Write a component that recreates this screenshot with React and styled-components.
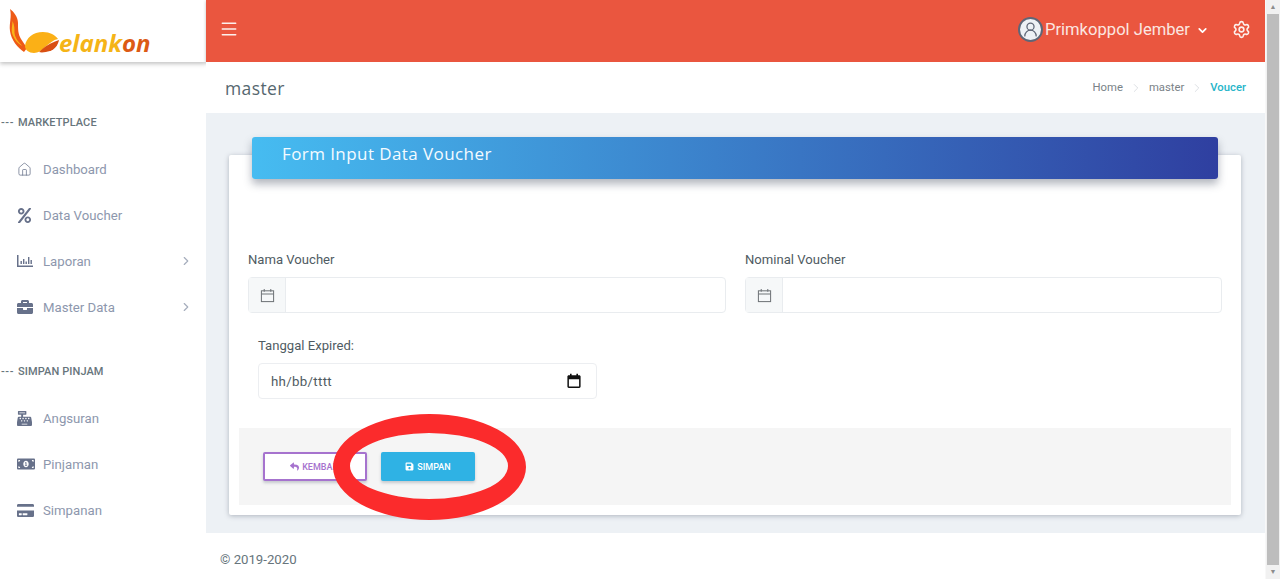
import React from "react";
import styled, { createGlobalStyle } from "styled-components";
import { Menu, ChevronDown, ChevronRight, Settings, Home, UserRound } from "lucide-react";
import { FaBriefcase, FaMoneyBillAlt, FaCreditCard, FaCashRegister, FaReply, FaSave, FaPercent } from "react-icons/fa";

const GlobalStyle = createGlobalStyle`
  html, body {
    margin: 0;
    padding: 0;
    height: 579px;
    overflow: hidden;
    font-family: "Roboto", "Liberation Sans", sans-serif;
    background: #fff;
  }
  #root { height: 579px; }
  * { box-sizing: border-box; }
`;

const Page = styled.div`
  position: relative;
  display: flex;
  height: 579px;
  overflow: hidden;
`;

const Sidebar = styled.aside`
  width: 206px;
  flex: none;
  background: #fff;
`;

const Brand = styled.div`
  height: 62px;
  padding: 8px 0 0 9px;
  display: flex;
  align-items: flex-start;
  box-shadow: 0 2px 4px rgba(60, 60, 60, 0.3);
`;

const BrandText = styled.span`
  font-family: "Open Sans", sans-serif;
  font-style: italic;
  font-weight: 700;
  font-size: 24px;
  line-height: 28px;
  margin: 21px 0 0 -1px;
  color: #f5b417;
`;

const BrandAccent = styled.span`
  color: #dc5a14;
`;

const SectionLabel = styled.div`
  font-size: 11px;
  font-weight: 500;
  line-height: 14px;
  padding-left: 1px;
  color: #67757c;
  padding-top: ${(p) => p.$top}px;
  white-space: nowrap;
  letter-spacing: 0.1px;
`;

const SectionDash = styled.span`
  letter-spacing: 0.6px;
  margin-right: 4px;
`;

const NavList = styled.ul`
  list-style: none;
  margin: 0;
  padding: 16px 0 0;
`;

const NavRow = styled.li`
  height: 46px;
  display: flex;
  align-items: center;
  padding: 0 13px 0 17px;
  color: #8d97ad;
  font-size: 13.2px;
`;

const NavIcon = styled.span`
  width: 26px;
  flex: none;
  display: flex;
  color: #67718a;
`;

const NavText = styled.span`
  flex: 1;
`;

const Main = styled.div`
  flex: 1;
  min-width: 0;
  display: flex;
  flex-direction: column;
  background: #edf1f5;
`;

const Topbar = styled.header`
  height: 62px;
  flex: none;
  background: #ea563f;
  display: flex;
  align-items: center;
  justify-content: space-between;
  padding: 0 14px 4px 13px;
  color: #fff;
  box-shadow: 0 1px 3px rgba(0, 0, 0, 0.25);
`;

const IconButton = styled.span`
  display: flex;
  color: #fdf0ed;
`;

const UserArea = styled.div`
  display: flex;
  align-items: center;
`;

const Avatar = styled.span`
  width: 25px;
  height: 25px;
  border-radius: 50%;
  background: #eef1f6;
  border: 2px solid #5f6677;
  color: #5f6677;
  display: flex;
  align-items: center;
  justify-content: center;
`;

const UserName = styled.span`
  font-size: 16.6px;
  margin-left: 2px;
  color: #fbe6e1;
`;

const TitleBar = styled.div`
  height: 51px;
  flex: none;
  background: #fff;
  display: flex;
  align-items: center;
  justify-content: space-between;
  padding: 0 19px 0 19px;
`;

const PageTitle = styled.h1`
  margin: 0;
  font-family: "Open Sans", sans-serif;
  font-weight: 400;
  font-size: 17.5px;
  letter-spacing: 0.4px;
  color: #56676f;
`;

const Crumbs = styled.nav`
  display: flex;
  align-items: center;
  gap: 6px;
  font-size: 11.3px;
  color: #7a8287;
`;

const CrumbSep = styled.span`
  display: flex;
  color: #c4c9d0;
`;

const CrumbCurrent = styled.span`
  color: #26b5c9;
  font-weight: 500;
`;

const Content = styled.main`
  flex: 1;
  padding: 42px 24px 18px 23px;
`;

const Card = styled.section`
  display: flow-root;
  height: 360px;
  background: #fff;
  border-radius: 2px;
  box-shadow: 0 1px 5px rgba(60, 70, 90, 0.35);
  padding: 0 19px;
`;

const CardHeader = styled.div`
  height: 42px;
  margin: -18px 4px 0;
  padding: 0 30px;
  border-radius: 3px;
  background: linear-gradient(90deg, #46bcf1, #2f3fa0);
  box-shadow: 0 5px 9px rgba(60, 70, 90, 0.4);
  color: #f4fbff;
  font-family: "Open Sans", sans-serif;
  font-size: 17px;
  line-height: 34px;
  letter-spacing: 0.42px;
`;

const FieldRow = styled.div`
  display: grid;
  grid-template-columns: 478px 477px;
  gap: 19px;
  margin-top: 73px;
`;

const Label = styled.div`
  font-size: 13.1px;
  line-height: 16px;
  color: #4f5b62;
  margin-bottom: 9px;
`;

const InputGroup = styled.div`
  height: 36px;
  display: flex;
  border: 1px solid #e9ecef;
  border-radius: 4px;
  background: #fff;
`;

const InputAddon = styled.span`
  width: 37px;
  flex: none;
  display: flex;
  align-items: center;
  justify-content: center;
  background: #f6f8f9;
  border-right: 1px solid #e9ecef;
  color: #6f7478;
`;

const DateBlock = styled.div`
  width: 339px;
  margin: 25px 0 0 10px;
`;

const DateField = styled.div`
  height: 36px;
  display: flex;
  align-items: center;
  justify-content: space-between;
  padding: 0 14px 0 12px;
  border: 1px solid #eceef1;
  border-radius: 4px;
  font-size: 13.3px;
  letter-spacing: 0.3px;
  color: #4f5b62;
`;

const ActionBar = styled.div`
  height: 77px;
  margin: 29px -9px 0 -9px;
  background: #f5f5f5;
  display: flex;
  align-items: center;
  gap: 14px;
  padding: 0 0 0 24px;
`;

const ActionButton = styled.button`
  width: ${(p) => p.$width}px;
  height: 29px;
  display: flex;
  align-items: center;
  justify-content: center;
  gap: 3px;
  padding: 0;
  border-radius: 2px;
  font-family: inherit;
  font-size: 9px;
  font-weight: 500;
  border: ${(p) => (p.$outline ? "2px solid #a673ce" : "none")};
  background: ${(p) => (p.$outline ? "#fff" : "#2fb2e4")};
  color: ${(p) => (p.$outline ? "#a673ce" : "#fff")};
  box-shadow: 0 2px 3px rgba(60, 70, 90, 0.25);
`;

const Footer = styled.footer`
  height: 46px;
  flex: none;
  background: #fff;
  display: flex;
  align-items: center;
  padding: 7px 14px 0;
  font-size: 13.2px;
  color: #67757c;
`;

const Scrollbar = styled.div`
  width: 15px;
  flex: none;
  background: #f1f1f1;
  border-left: 1px solid #f8f8f8;
  display: flex;
  flex-direction: column;
  align-items: center;
`;

const ScrollArrow = styled.span`
  height: 14px;
  flex: none;
  font-size: 7px;
  line-height: 14px;
  color: #8c8c8c;
`;

const ScrollThumb = styled.div`
  width: 12px;
  flex: 1;
  background: #bdbdbd;
`;

const AnnotationMark = styled.svg`
  position: absolute;
  left: 330px;
  top: 412px;
`;

const CalendarLine = ({ size = 15 }) => (
  <svg width={size} height={size} viewBox="0 0 16 16" fill="none" stroke="currentColor" strokeWidth="1.1">
    <rect x="1.5" y="3" width="13" height="11.5" />
    <path d="M1.5 6.500h13M4.500 1v3M11.500 1v3" />
  </svg>
);

const CalendarSolid = () => (
  <svg width="16" height="16" viewBox="0 0 16 16" fill="#111">
    <path d="M4 0.800h1.600v1.400h4.800V0.800H12v1.400h1.200c.8 0 1.400.6 1.400 1.400v10c0 .8-.6 1.400-1.400 1.400H2.800c-.8 0-1.400-.6-1.400-1.400v-10c0-.8.6-1.400 1.400-1.400H4zM2.900 6.200v7.400h10.200V6.200z" />
  </svg>
);

const ReportIcon = () => (
  <svg width="16" height="14" viewBox="0 0 16 14" fill="currentColor">
    <path d="M0 1h1.500v10.500H16V13H0z" />
    <path d="M3.500 7h1.400v3H3.500zM6 5h1.400v5H6zM8.500 7.500h1.400V10H8.500zM11 3h1.400v7H11zM13.500 6h1.400v4h-1.400z" />
  </svg>
);

const LogoMark = () => (
  <svg width="51" height="48" viewBox="0 0 51 48">
    <path d="M1 1c4 3 8 8 8 14 0 6 0 11 3 16 2 3 4 6 6 9l-3 4C9 40 2 32 1 23 0 15 3 9 1 1z" fill="#ee5a16" />
    <path d="M3.500 13c2 4 2 8 2 12 .5 5 4 9 8 13-5-2-9-8-10.500-13-.8-4 .5-8 .5-12z" fill="#f9b41a" />
    <path d="M16 38c1-8 8-14 18-14 7 0 12 3 15 7-5 1-8 4-13 8-3 3-7 6-11 6-5 0-9-3-9-7z" fill="#fbb016" />
    <path d="M30 44c5-5 11-9 20-12-1 5-4 9-9 11-4 1-8 2-11 1z" fill="#d94f12" />
  </svg>
);

const marketplace = [
  { label: "Dashboard", icon: <Home size={15} strokeWidth={1.2} /> },
  { label: "Data Voucher", icon: <FaPercent size={15} /> },
  { label: "Laporan", icon: <ReportIcon />, more: true },
  { label: "Master Data", icon: <FaBriefcase size={16} />, more: true },
];

const savings = [
  { label: "Angsuran", icon: <FaCashRegister size={15} /> },
  { label: "Pinjaman", icon: <FaMoneyBillAlt size={18} /> },
  { label: "Simpanan", icon: <FaCreditCard size={17} /> },
];

const NavItems = ({ items }) => (
  <NavList>
    {items.map((item) => (
      <NavRow key={item.label}>
        <NavIcon>{item.icon}</NavIcon>
        <NavText>{item.label}</NavText>
        {item.more && <ChevronRight size={14} color="#a6aebd" />}
      </NavRow>
    ))}
  </NavList>
);

export default function App() {
  return (
    <Page>
      <GlobalStyle />
      <Sidebar>
        <Brand>
          <LogoMark />
          <BrandText>
            elank<BrandAccent>on</BrandAccent>
          </BrandText>
        </Brand>
        <SectionLabel $top={54}>
          <SectionDash>---</SectionDash>MARKETPLACE
        </SectionLabel>
        <NavItems items={marketplace} />
        <SectionLabel $top={35}>
          <SectionDash>---</SectionDash>SIMPAN PINJAM
        </SectionLabel>
        <NavItems items={savings} />
      </Sidebar>

      <Main>
        <Topbar>
          <IconButton>
            <Menu size={20} strokeWidth={1.8} />
          </IconButton>
          <UserArea>
            <Avatar>
              <UserRound size={17} strokeWidth={1.8} />
            </Avatar>
            <UserName>Primkoppol Jember</UserName>
            <ChevronDown size={13} strokeWidth={3.2} style={{ margin: "2px 23px 0 6px" }} />
            <IconButton>
              <Settings size={19} strokeWidth={2} />
            </IconButton>
          </UserArea>
        </Topbar>

        <TitleBar>
          <PageTitle>master</PageTitle>
          <Crumbs>
            <span>Home</span>
            <CrumbSep>
              <ChevronRight size={14} strokeWidth={1} />
            </CrumbSep>
            <span>master</span>
            <CrumbSep>
              <ChevronRight size={14} strokeWidth={1} />
            </CrumbSep>
            <CrumbCurrent>Voucer</CrumbCurrent>
          </Crumbs>
        </TitleBar>

        <Content>
          <Card>
            <CardHeader>Form Input Data Voucher</CardHeader>
            <FieldRow>
              <div>
                <Label>Nama Voucher</Label>
                <InputGroup>
                  <InputAddon>
                    <CalendarLine />
                  </InputAddon>
                </InputGroup>
              </div>
              <div>
                <Label>Nominal Voucher</Label>
                <InputGroup>
                  <InputAddon>
                    <CalendarLine />
                  </InputAddon>
                </InputGroup>
              </div>
            </FieldRow>
            <DateBlock>
              <Label>Tanggal Expired:</Label>
              <DateField>
                hh/bb/tttt
                <CalendarSolid />
              </DateField>
            </DateBlock>
            <ActionBar>
              <ActionButton $outline $width={104}>
                <FaReply size={9} /> KEMBALI
              </ActionButton>
              <ActionButton $width={94}>
                <FaSave size={9} /> SIMPAN
              </ActionButton>
            </ActionBar>
          </Card>
        </Content>

        <Footer>© 2019-2020</Footer>
      </Main>

      <Scrollbar>
        <ScrollArrow>▲</ScrollArrow>
        <ScrollThumb />
        <ScrollArrow>▼</ScrollArrow>
      </Scrollbar>

      <AnnotationMark width="200" height="112" viewBox="0 0 200 112">
        <path
          fillRule="evenodd"
          fill="#fb2b2c"
          d="M3 55a96.500 53 0 1 0 193 0a96.500 53 0 1 0-193 0zM20 54a79 33 0 1 1 158 0a79 33 0 1 1-158 0z"
        />
      </AnnotationMark>
    </Page>
  );
}
